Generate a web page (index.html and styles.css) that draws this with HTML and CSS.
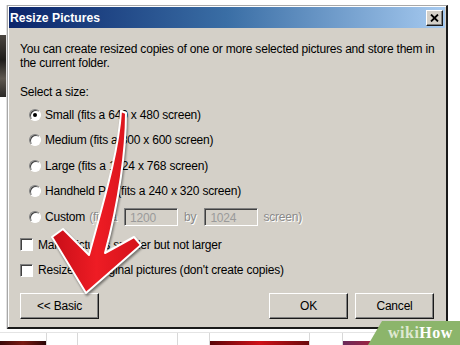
FILE: index.html
```html
<!DOCTYPE html>
<html lang="en">
<head>
    <meta charset="UTF-8">
    <meta name="viewport" content="width=device-width, initial-scale=1.0">
    <title>Resize Pictures</title>
    <link rel="stylesheet" href="styles.css">
</head>
<body>

    <div class="screen">
        <div class="side">
            <div class="side-photo"></div>
        </div>

        <div class="dialog">
            <div class="titlebar">
                <span class="title">Resize Pictures</span>
                <span class="close">
                    <svg width="9" height="8" viewBox="0 0 9 8">
                        <path d="M1 0.5 L8 7.5 M8 0.5 L1 7.5" stroke="#000" stroke-width="1.8" fill="none"/>
                    </svg>
                </span>
            </div>

            <div class="content">
                <p class="intro">You can create resized copies of one or more selected pictures and store them in<br>the current folder.</p>
                <p class="label">Select a size:</p>

                <div class="options">
                    <div class="option"><span class="radio checked"></span><span>Small (fits a 640 x 480 screen)</span></div>
                    <div class="option"><span class="radio"></span><span>Medium (fits a 800 x 600 screen)</span></div>
                    <div class="option"><span class="radio"></span><span>Large (fits a 1024 x 768 screen)</span></div>
                    <div class="option"><span class="radio"></span><span>Handheld PC (fits a 240 x 320 screen)</span></div>
                    <div class="option">
                        <span class="radio"></span>
                        <span>Custom</span>
                        <span class="muted">(fits a</span>
                        <span class="field">1200</span>
                        <span class="muted by">by</span>
                        <span class="field">1024</span>
                        <span class="muted">screen)</span>
                    </div>
                </div>

                <div class="checks">
                    <div class="check"><span class="box"></span><span>Make pictures smaller but not larger</span></div>
                    <div class="check"><span class="box"></span><span>Resize the original pictures (don't create copies)</span></div>
                </div>

                <div class="buttons">
                    <button class="btn">&lt;&lt; Basic</button>
                    <span class="spacer"></span>
                    <button class="btn">OK</button>
                    <button class="btn">Cancel</button>
                </div>
            </div>
        </div>

        <div class="strip">
            <div class="cell w47"><div class="photo dark"></div></div>
            <div class="cell w31"></div>
            <div class="cell w100"></div>
            <div class="cell w32"></div>
            <div class="cell w100"><div class="photo red"></div></div>
            <div class="cell w33"></div>
            <div class="cell w97"><div class="photo color"></div></div>
            <div class="cell rest"></div>
        </div>

        <!-- red arrow drawn over the dialog -->
        <svg class="arrow" width="460" height="345" viewBox="0 0 460 345">
            <defs>
                <linearGradient id="red" x1="0" y1="0" x2="1" y2="0">
                    <stop offset="0" stop-color="#c80e18"/>
                    <stop offset="0.5" stop-color="#ee1c24"/>
                    <stop offset="1" stop-color="#d3121b"/>
                </linearGradient>
            </defs>
            <path d="M86 293 L52 237 L63 229 L89 255 C104 200 119 150 121 111 L126 113 C126 150 119 202 105 253 L134 237 L141 245 Z"
                  fill="url(#red)" stroke="#fff" stroke-width="2" stroke-linejoin="round"/>
        </svg>

        <div class="badge"><span class="wiki">wiki</span>How</div>
    </div>

</body>
</html>
```

FILE: styles.css
```css
body {
    margin: 0;
    font-family: 'Liberation Sans', Arial, sans-serif;
}

.screen {
    position: relative;
    width: 460px;
    height: 345px;
    overflow: hidden;
    background-color: #fff;
    display: grid;
    grid-template-columns: 7px 441px 1fr;
    grid-template-rows: 5px 324px 1fr;
}

.side {
    grid-column: 1;
    grid-row: 2;
    padding-top: 30px;
    border-right: 1px solid #e2e2e2;
}

.side-photo {
    height: 62px;
    background: linear-gradient(180deg, #4a4540, #1e1c1a 40%, #5e5850 70%, #2a2826);
}

.dialog {
    grid-column: 2;
    grid-row: 2;
    box-sizing: border-box;
    padding: 1px;
    background-color: #d4d0c8;
    border-style: solid;
    border-width: 1px 2px 2px 1px;
    border-color: #a8a8a8 #1a1a1a #1a1a1a #a8a8a8;
    box-shadow: inset 1px 1px 0 #fff;
    display: flex;
    flex-direction: column;
}

.titlebar {
    height: 21px;
    display: flex;
    align-items: center;
    justify-content: space-between;
    padding: 0 2px 0 1px;
    background: linear-gradient(90deg, #0a246a, #3a6ea5 50%, #a6caf0);
}

.title {
    color: #fff;
    font-weight: bold;
    font-size: 12.2px;
}

.close {
    box-sizing: border-box;
    width: 17px;
    height: 16px;
    display: flex;
    align-items: center;
    justify-content: center;
    background-color: #d4d0c8;
    border: 1px solid;
    border-color: #fff #1a1a1a #1a1a1a #fff;
    box-shadow: inset -1px -1px 0 #808080;
}

.content {
    flex: 1;
    padding: 14px 11px 0 11px;
    font-size: 12px;
    letter-spacing: -0.2px;
    color: #000;
}

.intro {
    margin: 0;
    line-height: 14px;
    white-space: nowrap;
}

.label {
    margin: 15px 0 0 0;
    line-height: 14px;
}

.options {
    margin-top: 3px;
}

.option {
    height: 25.5px;
    display: flex;
    align-items: center;
    gap: 4px;
    padding-left: 9px;
    white-space: nowrap;
}

.radio {
    position: relative;
    box-sizing: border-box;
    width: 12px;
    height: 12px;
    border-radius: 50%;
    background-color: #fff;
    border: 1px solid;
    border-color: #808080 #fff #fff #808080;
    box-shadow: inset 1px 1px 0 #404040;
}

.radio.checked::after {
    content: "";
    position: absolute;
    left: 3px;
    top: 3px;
    width: 4px;
    height: 4px;
    border-radius: 50%;
    background-color: #000;
}

.muted {
    color: #8a8a8a;
    text-shadow: 1px 1px 0 #fff;
}

.field {
    box-sizing: border-box;
    width: 54px;
    height: 18px;
    margin: 0 1px 0 3px;
    padding: 2px 5px 0;
    color: #9a9a9a;
    background-color: #d4d0c8;
    border: 1px solid;
    border-color: #808080 #fff #fff #808080;
    box-shadow: inset 1px 1px 0 #404040;
}

.by {
    margin: 0 1px;
}

.checks {
    margin-top: 2.5px;
}

.check {
    height: 25.5px;
    display: flex;
    align-items: center;
    gap: 5px;
    white-space: nowrap;
}

.box {
    box-sizing: border-box;
    width: 13px;
    height: 13px;
    background-color: #fff;
    border: 1px solid;
    border-color: #808080 #fff #fff #808080;
    box-shadow: inset 1px 1px 0 #404040;
}

.buttons {
    margin-top: 10px;
    display: flex;
    gap: 7px;
}

.spacer {
    flex: 1;
}

.btn {
    box-sizing: border-box;
    width: 79px;
    height: 26px;
    padding: 0;
    font-family: inherit;
    font-size: 12px;
    letter-spacing: -0.2px;
    color: #000;
    background-color: #d4d0c8;
    border: 1px solid;
    border-color: #fff #1a1a1a #1a1a1a #fff;
    box-shadow: inset -1px -1px 0 #808080;
}

.strip {
    grid-column: 1 / -1;
    grid-row: 3;
    margin-top: 3px;
    display: flex;
    border-top: 1px solid #e4e4e4;
}

.cell {
    box-sizing: border-box;
    display: flex;
    align-items: flex-end;
    border-right: 1px solid #d8d8d8;
}

.w47 { width: 47px; }
.w31 { width: 31px; }
.w100 { width: 100px; }
.w32 { width: 32px; }
.w33 { width: 33px; }
.w97 { width: 97px; }
.rest { flex: 1; border-right: none; }

.photo {
    width: 100%;
    height: 4px;
}

.photo.dark {
    background: linear-gradient(90deg, #3a0a0a, #7a1a12, #2a0606);
}

.photo.red {
    background: linear-gradient(90deg, #5a0508, #d01018 50%, #6a0a0c);
}

.photo.color {
    background: linear-gradient(90deg, #6a2a5a, #c02030, #3a3a7a);
}

.arrow {
    position: absolute;
    left: 0;
    top: 0;
    pointer-events: none;
    filter: drop-shadow(1px 2px 1px rgba(0, 0, 0, 0.45));
}

.badge {
    position: absolute;
    left: 368px;
    top: 321px;
    width: 92px;
    height: 24px;
    box-sizing: border-box;
    padding: 3px 0 0 20px;
    background-color: #8cb56b;
    clip-path: polygon(14px 0, 100% 0, 100% 100%, 0 100%);
    font-family: 'Liberation Serif', serif;
    font-weight: bold;
    font-size: 16px;
    letter-spacing: 0.5px;
    color: #fff;
}

.wiki {
    color: #dfe9d2;
}
```
